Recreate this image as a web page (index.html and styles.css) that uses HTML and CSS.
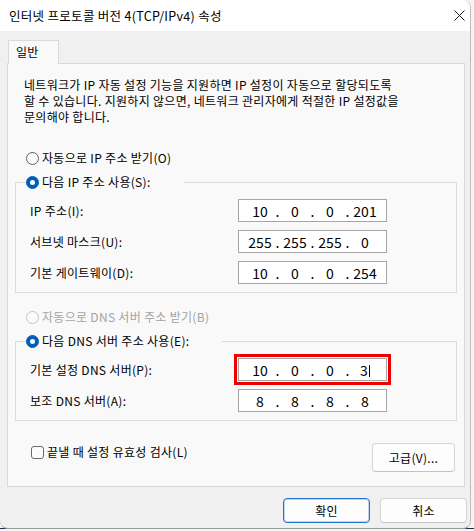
FILE: index.html
```html
<!doctype html>
<html>
    <head>
        <meta charset="utf-8">
        <title>인터넷 프로토콜 버전 4(TCP/IPv4) 속성</title>
        <link rel="stylesheet" href="styles.css">
    </head>
    <body>
        <div class="window">
            <div class="titlebar">
                <span class="title">인터넷 프로토콜 버전 4(TCP/IPv4) 속성</span>
                <svg class="close" width="11" height="11" viewBox="0 0 11 11">
                    <path d="M0.5 0.5 L10.5 10.5 M10.5 0.5 L0.5 10.5" stroke="#1b1b1b" stroke-width="1" fill="none"/>
                </svg>
            </div>
            <div class="client">
                <div class="tabs"><div class="tab">일반</div></div>
                <div class="panel">
                    <p class="intro">네트워크가 IP 자동 설정 기능을 지원하면 IP 설정이 자동으로 할당되도록<br>할 수 있습니다. 지원하지 않으면, 네트워크 관리자에게 적절한 IP 설정값을<br>문의해야 합니다.</p>

                    <!-- IP address -->
                    <div class="option first"><span class="radio"></span>자동으로 IP 주소 받기(O)</div>
                    <fieldset class="group">
                        <legend class="option"><span class="radio on"></span>다음 IP 주소 사용(S):</legend>
                        <div class="row">
                            <label>IP 주소(I):</label>
                            <div class="ip"><span>10</span><i>.</i><span>0</span><i>.</i><span>0</span><i>.</i><span>201</span></div>
                        </div>
                        <div class="row">
                            <label>서브넷 마스크(U):</label>
                            <div class="ip"><span>255</span><i>.</i><span>255</span><i>.</i><span>255</span><i>.</i><span>0</span></div>
                        </div>
                        <div class="row">
                            <label>기본 게이트웨이(D):</label>
                            <div class="ip"><span>10</span><i>.</i><span>0</span><i>.</i><span>0</span><i>.</i><span>254</span></div>
                        </div>
                    </fieldset>

                    <!-- DNS -->
                    <div class="option dns disabled"><span class="radio off"></span>자동으로 DNS 서버 주소 받기(B)</div>
                    <fieldset class="group">
                        <legend class="option"><span class="radio on"></span>다음 DNS 서버 주소 사용(E):</legend>
                        <div class="row">
                            <label>기본 설정 DNS 서버(P):</label>
                            <div class="ip marked"><span>10</span><i>.</i><span>0</span><i>.</i><span>0</span><i>.</i><span>3<b class="caret"></b></span></div>
                        </div>
                        <div class="row">
                            <label>보조 DNS 서버(A):</label>
                            <div class="ip"><span>8</span><i>.</i><span>8</span><i>.</i><span>8</span><i>.</i><span>8</span></div>
                        </div>
                    </fieldset>

                    <div class="footer">
                        <label class="check"><span class="box"></span>끝낼 때 설정 유효성 검사(L)</label>
                        <button class="btn advanced">고급(V)...</button>
                    </div>
                </div>
                <div class="actions">
                    <button class="btn default">확인</button>
                    <button class="btn">취소</button>
                </div>
            </div>
        </div>
    </body>
</html>
```

FILE: styles.css
```css
* { margin: 0; padding: 0; box-sizing: border-box; }

html {
    background: linear-gradient(#f5f5f5 0, #f5f5f5 528px, #1d2b4a 528px);
}

body {
    font-family: "Noto Sans CJK KR", "Noto Sans", sans-serif;
    font-size: 12px;
    line-height: 16px;
    letter-spacing: 0.3px;
    color: #000;
}

.window {
    width: 471px;
    height: 529px;
    background: #f0f0f0;
    border-right: 1px solid #bcbcbc;
    border-bottom: 1px solid #9a9a9a;
    border-radius: 0 8px 8px 8px;
    overflow: hidden;
    display: flex;
    flex-direction: column;
}

/* title bar */
.titlebar {
    height: 31px;
    flex: none;
    background: #fff;
    display: flex;
    align-items: center;
    justify-content: space-between;
    padding: 1px 5px 0 9px;
    font-size: 12.5px;
}

.close {
    margin-top: -1px;
}

/* dialog area */
.client {
    flex: 1;
    padding: 9px 0 0 7px;
    display: flex;
    flex-direction: column;
}

.tabs {
    display: flex;
    padding-left: 1px;
}

.tab {
    width: 51px;
    height: 24px;
    margin-bottom: -1px;
    border: 1px solid #d9d9d9;
    border-bottom: none;
    background: #f9f9f9;
    padding: 3px 0 0 7px;
    position: relative;
    z-index: 1;
}

.panel {
    width: 458px;
    height: 424px;
    border: 1px solid #d9d9d9;
    background: #f9f9f9;
    padding: 13px 7px 0;
    display: flex;
    flex-direction: column;
}

.intro {
    padding-left: 9px;
}

.option {
    display: flex;
    align-items: center;
    gap: 3px;
    height: 16px;
}

.option.first, .option.dns {
    padding-left: 11px;
}

.option.first { margin-top: 25px; }
.option.dns { margin-top: 16px; }

.option.disabled {
    color: #a3a3a3;
}

.radio {
    width: 13px;
    height: 13px;
    flex: none;
    border-radius: 50%;
    border: 1px solid #5f5f5f;
    background: #fbfbfb;
}

.radio.off {
    border-color: #c4c4c4;
}

.radio.on {
    background: #005fb8;
    border-color: #005fb8;
    display: grid;
    place-items: center;
}

.radio.on::after {
    content: "";
    width: 5px;
    height: 5px;
    border-radius: 50%;
    background: #fff;
}

/* group boxes */
.group {
    margin-top: 8px;
    border: 1px solid #dcdcdc;
    padding: 9px 0 8px 10px;
}

.group legend {
    padding-right: 33px;
}

.row {
    display: grid;
    grid-template-columns: 208px 149px;
    align-items: center;
    height: 23px;
    padding-left: 4px;
}

.row + .row {
    margin-top: 8px;
}

.ip {
    height: 23px;
    border: 1px solid #a6a6a6;
    background: #fff;
    display: flex;
    align-items: center;
    padding-left: 6px;
    font-size: 14px;
    letter-spacing: 0;
}

.ip span {
    width: 30px;
    text-align: center;
}

.ip i {
    width: 5px;
    font-style: normal;
    text-align: center;
}

.ip.marked {
    outline: 3px solid #ee0000;
    outline-offset: 1px;
}

.caret {
    display: inline-block;
    width: 1px;
    height: 12px;
    margin-left: 1px;
    background: #000;
    vertical-align: -1px;
}

/* bottom of the tab */
.footer {
    display: flex;
    justify-content: space-between;
    align-items: flex-start;
    margin-top: 22px;
    padding: 0 2px 0 16px;
}

.check {
    display: flex;
    align-items: center;
    gap: 3px;
    margin-top: 1px;
}

.box {
    width: 13px;
    height: 13px;
    border: 1px solid #6a6a6a;
    border-radius: 3px;
    background: #fbfbfb;
}

.btn {
    font-family: inherit;
    font-size: 12px;
    line-height: 16px;
    letter-spacing: 0.3px;
    color: #000;
    background: #fdfdfd;
    border: 1px solid #d4d4d4;
    border-bottom-color: #c2c2c2;
    border-radius: 4px;
}

.advanced {
    width: 83px;
    height: 29px;
}

.actions {
    display: flex;
    justify-content: flex-end;
    gap: 10px;
    margin-top: 11px;
    padding-right: 3px;
}

.actions .btn {
    width: 87px;
    height: 25px;
}

.btn.default {
    border-color: #2574c9;
    box-shadow: inset 0 0 0 1px #bcd6f2;
}
```
